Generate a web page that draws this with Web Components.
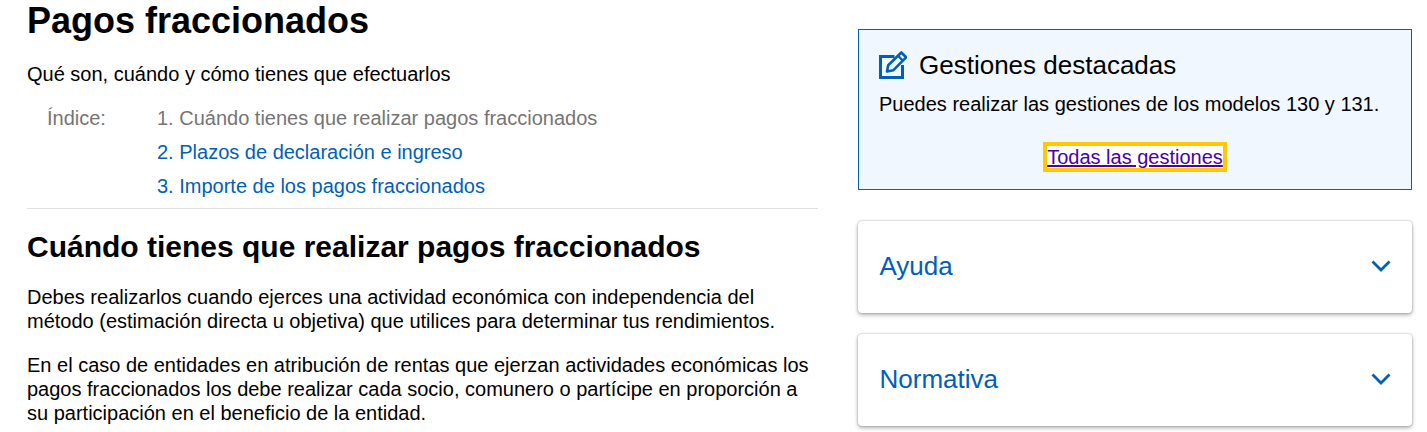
<!DOCTYPE html>
<html lang="es">
<head>
<meta charset="utf-8">
<title>Pagos fraccionados</title>
<style>
  html, body { margin: 0; background: #fff; }
  body { font-family: "Liberation Sans", Arial, sans-serif; overflow: hidden; height: 432px; }
</style>
</head>
<body>
<page-layout>
  <main-content slot="main"></main-content>
  <featured-box slot="side"></featured-box>
  <collapse-card slot="side" title-text="Ayuda"></collapse-card>
  <collapse-card slot="side" title-text="Normativa"></collapse-card>
</page-layout>

<script>
class PageLayout extends HTMLElement {
  constructor() {
    super();
    this.attachShadow({ mode: "open" });
    this.shadowRoot.innerHTML = `
<style>
      :host {
        display: flex;
        gap: 40px;
        padding-left: 27px;
        align-items: flex-start;
      }
      .main { display: block; width: 791px; flex: none; }
      .side {
        width: 554px;
        flex: none;
        display: flex;
        flex-direction: column;
        gap: 21px;
        padding-top: 29px;
      }
</style>
      <div class="main"><slot name="main"></slot></div>
      <div class="side"><slot name="side"></slot></div>
    `;
  }
}

class IndexList extends HTMLElement {
  constructor() {
    super();
    this.attachShadow({ mode: "open" });
    this.shadowRoot.innerHTML = `
<style>
      :host {
        display: grid;
        grid-template-columns: 110px 1fr;
        padding: 0 0 5px 20px;
        border-bottom: 1px solid #e0e0e6;
        font-size: 20px;
        line-height: 34px;
      }
      .label { color: #757575; }
      ol { list-style: none; margin: 0; padding: 0; }
      .current { color: #757575; }
      a { color: #0060b8; text-decoration: none; }
</style>
      <span class="label">Índice:</span>
      <ol>
        <li class="current">1. Cuándo tienes que realizar pagos fraccionados</li>
        <li><a href="#plazos">2. Plazos de declaración e ingreso</a></li>
        <li><a href="#importe">3. Importe de los pagos fraccionados</a></li>
      </ol>
    `;
  }
}

class MainContent extends HTMLElement {
  constructor() {
    super();
    this.attachShadow({ mode: "open" });
    this.shadowRoot.innerHTML = `
<style>
      :host { display: block; color: #000; }
      h1 { margin: 0; font-size: 36px; line-height: 41px; font-weight: 700; }
      h2 { margin: 20px 0 0; font-size: 30px; line-height: 36px; font-weight: 700; }
      p { margin: 0; font-size: 20px; line-height: 24px; }
      .lead { margin: 21px 0 15px; }
      .first { margin-top: 20px; }
      .next { margin-top: 20px; }
</style>
      <h1>Pagos fraccionados</h1>
      <p class="lead">Qué son, cuándo y cómo tienes que efectuarlos</p>
      <index-list></index-list>
      <h2>Cuándo tienes que realizar pagos fraccionados</h2>
      <p class="first">Debes realizarlos cuando ejerces una actividad económica con independencia del método (estimación directa u objetiva) que utilices para determinar tus rendimientos.</p>
      <p class="next">En el caso de entidades en atribución de rentas que ejerzan actividades económicas los pagos fraccionados los debe realizar cada socio, comunero o partícipe en proporción a su participación en el beneficio de la entidad.</p>
    `;
  }
}

class FeaturedBox extends HTMLElement {
  constructor() {
    super();
    this.attachShadow({ mode: "open" });
    this.shadowRoot.innerHTML = `
<style>
      :host {
        display: block;
        box-sizing: border-box;
        height: 161px;
        margin-bottom: 10px;
        padding: 20px;
        background: #f0f7fe;
        border: 1px solid #0060b8;
      }
      .head { display: flex; align-items: center; gap: 12px; }
      svg { width: 28px; height: 28px; flex: none; }
      h3 { margin: 0; font-size: 26px; line-height: 30px; font-weight: 400; }
      p { margin: 12px 0 0; font-size: 20px; line-height: 24px; }
      .more { margin-top: 29px; text-align: center; font-size: 20px; line-height: 24px; }
      a {
        color: #4800a8;
        background: #fff;
        outline: 4px solid #ffc800;
        text-decoration-thickness: 2px;
      }
</style>
      <div class="head">
        <svg viewBox="0 0 28 28" fill="none" stroke="#0060b8" aria-hidden="true">
          <path d="M15.5 5.5H1.5V26.5H23.5V14" stroke-width="3"/>
          <path d="M8 20.5l1.2-6.2L22.3 1.5l4.8 4.8L14.2 19.3z" stroke-width="2.6" stroke-linejoin="round"/>
          <path d="M19 4.8l4.8 4.8" stroke-width="2.2"/>
        </svg>
        <h3>Gestiones destacadas</h3>
      </div>
      <p>Puedes realizar las gestiones de los modelos 130 y 131.</p>
      <div class="more"><a href="#gestiones">Todas las gestiones</a></div>
    `;
  }
}

class CollapseCard extends HTMLElement {
  static get observedAttributes() {
    return ["title-text"];
  }

  constructor() {
    super();
    this.attachShadow({ mode: "open" });
    this.shadowRoot.innerHTML = `
<style>
      :host {
        display: flex;
        box-sizing: border-box;
        height: 92px;
        padding: 0 21px 2px 21.5px;
        align-items: center;
        justify-content: space-between;
        background: #fff;
        border-radius: 4px;
        box-shadow: 0 0 2px rgba(0,0,0,.3), 0 2px 4px rgba(0,0,0,.3);
      }
      .title { font-size: 26px; color: #0060b8; }
      svg { width: 20px; height: 12px; }
</style>
      <span class="title"></span>
      <svg viewBox="0 0 20 12" fill="none" stroke="#0060b8" stroke-width="2.8" aria-hidden="true">
        <path d="M1.5 1.5l8.5 8.5 8.5-8.5"/>
      </svg>
    `;
  }

  attributeChangedCallback(name, oldValue, newValue) {
    if (name === "title-text") {
      this.shadowRoot.querySelector(".title").textContent = newValue;
    }
  }
}

customElements.define("page-layout", PageLayout);
customElements.define("index-list", IndexList);
customElements.define("main-content", MainContent);
customElements.define("featured-box", FeaturedBox);
customElements.define("collapse-card", CollapseCard);
</script>
</body>
</html>
